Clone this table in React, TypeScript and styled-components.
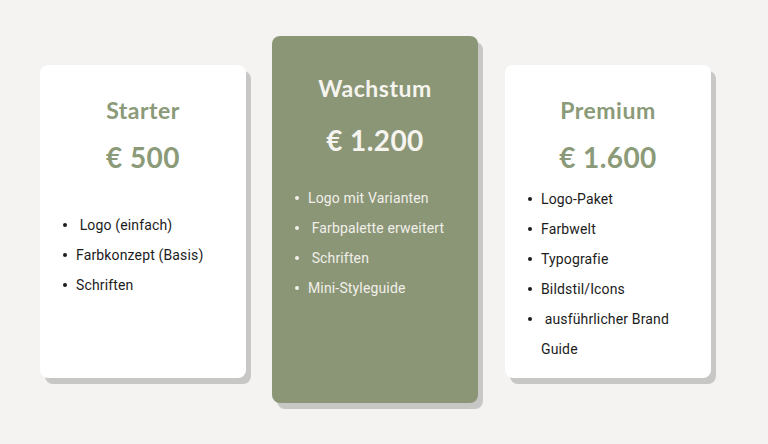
import styled, {createGlobalStyle} from "styled-components";

type Plan = {
    name: string;
    price: string;
    items: string[];
    featured?: boolean;
    padTop: number;
    priceGap: number;
    listGap: number;
}

const plans: Plan[] = [
    {
        name: "Starter",
        price: "€ 500",
        items: [" Logo (einfach)", "Farbkonzept (Basis)", "Schriften"],
        padTop: 30,
        priceGap: 14,
        listGap: 35,
    },
    {
        name: "Wachstum",
        price: "€ 1.200",
        items: ["Logo mit Varianten", " Farbpalette erweitert", " Schriften", "Mini-Styleguide"],
        featured: true,
        padTop: 37,
        priceGap: 19,
        listGap: 25,
    },
    {
        name: "Premium",
        price: "€ 1.600",
        items: ["Logo-Paket", "Farbwelt", "Typografie", "Bildstil/Icons", " ausführlicher Brand Guide"],
        padTop: 30,
        priceGap: 14,
        listGap: 9,
    },
]

function App() {
    return (
        <>
            <GlobalStyle/>
            <StyledPage>
                {plans.map(plan => (
                    <PlanCard key={plan.name} plan={plan}/>
                ))}
            </StyledPage>
        </>
    )
}

function PlanCard({plan}: { plan: Plan }) {
    const featured = !!plan.featured
    return (
        <StyledCard $featured={featured} $padTop={plan.padTop}>
            <StyledTitle $featured={featured}>{plan.name}</StyledTitle>
            <StyledPrice $featured={featured} $gap={plan.priceGap}>{plan.price}</StyledPrice>
            <StyledList $gap={plan.listGap}>
                {plan.items.map(item => (
                    <StyledItem key={item} $featured={featured}>
                        <StyledBullet/>
                        <StyledItemText>{item}</StyledItemText>
                    </StyledItem>
                ))}
            </StyledList>
        </StyledCard>
    )
}

const GlobalStyle = createGlobalStyle`
    html, body {
        margin: 0;
        padding: 0;
        background: #f4f3f1;
    }
    * {
        box-sizing: border-box;
    }
`

const StyledPage = styled.div`
    width: 768px;
    height: 444px;
    display: flex;
    align-items: center;
    gap: 26px;
    padding: 0 0 1px 40px;
    background: #f4f3f1;
`

const StyledCard = styled.div<{ $featured: boolean; $padTop: number }>`
    width: 206px;
    height: ${p => p.$featured ? 367 : 313}px;
    margin-top: ${p => p.$featured ? -4 : 0}px;
    padding: ${p => p.$padTop}px 0 0;
    border-radius: 8px;
    background: ${p => p.$featured ? "#8b9677" : "#ffffff"};
    box-shadow: 5px 6px 0 #c7c7c6;
    display: flex;
    flex-direction: column;

    & + & + & {
        margin-left: 1px;
    }
`

const StyledTitle = styled.h2<{ $featured: boolean }>`
    margin: 0;
    text-align: center;
    font-family: Lato, "Open Sans", sans-serif;
    font-weight: 700;
    font-size: 23px;
    line-height: 30px;
    letter-spacing: 0.5px;
    color: ${p => p.$featured ? "#f6f4ef" : "#8b9a78"};
`

const StyledPrice = styled.div<{ $featured: boolean; $gap: number }>`
    margin-top: ${p => p.$gap}px;
    text-align: center;
    font-family: Lato, "Open Sans", sans-serif;
    font-weight: 700;
    font-size: 28px;
    line-height: 36px;
    letter-spacing: 0.4px;
    color: ${p => p.$featured ? "#f6f4ef" : "#8b9a78"};
`

const StyledList = styled.ul<{ $gap: number }>`
    list-style: none;
    margin: ${p => p.$gap}px 0 0;
    padding: 0 20px 0 22px;
`

const StyledItem = styled.li<{ $featured: boolean }>`
    display: flex;
    align-items: flex-start;
    font-family: Roboto, "Liberation Sans", sans-serif;
    font-size: 14px;
    line-height: 30px;
    letter-spacing: 0.15px;
    color: ${p => p.$featured ? "#f1efe9" : "#1c1c1c"};
`

const StyledBullet = styled.span`
    flex: none;
    width: 14px;
    height: 30px;
    display: flex;
    align-items: center;

    &::before {
        content: "";
        width: 4px;
        height: 4px;
        border-radius: 50%;
        background: currentColor;
        margin-left: 1px;
    }
`

const StyledItemText = styled.span`
    white-space: pre-wrap;
`

export default App;
